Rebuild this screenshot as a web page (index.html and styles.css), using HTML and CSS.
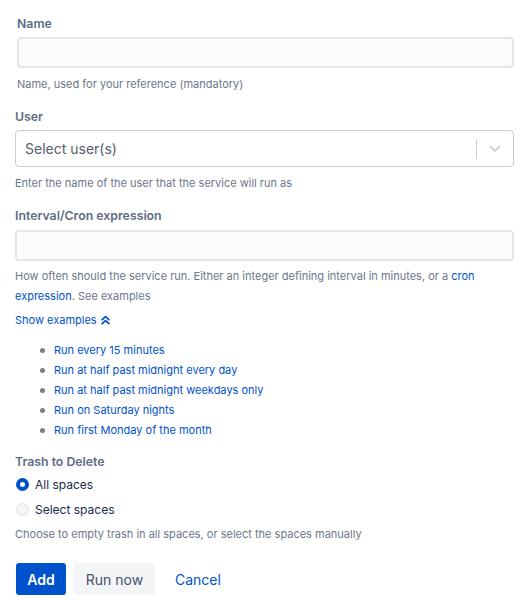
FILE: index.html
```html
<!DOCTYPE html>
<html>
<head>
<meta charset="utf-8">
<link rel="stylesheet" href="styles.css">
</head>
<body>
<form class="form">
  <div class="field field-name">
    <label class="label">Name</label>
    <input class="text-input" type="text">
    <div class="help help-first">Name, used for your reference (mandatory)</div>
  </div>

  <div class="field">
    <label class="label">User</label>
    <div class="select">
      <span class="placeholder">Select user(s)</span>
      <span class="sep"></span>
      <span class="chev">
        <svg width="12" height="8" viewBox="0 0 12 8"><path d="M1.5 1.5 L6 6 L10.5 1.5" fill="none" stroke="#c7c7c7" stroke-width="1.6" stroke-linecap="round" stroke-linejoin="round"/></svg>
      </span>
    </div>
    <div class="help">Enter the name of the user that the service will run as</div>
  </div>

  <div class="field">
    <label class="label">Interval/Cron expression</label>
    <input class="text-input input-interval" type="text">
    <div class="help help-wide">How often should the service run. Either an integer defining interval in minutes, or a <a class="link">cron</a><br><a class="link">expression</a>. See examples</div>
    <div class="toggle"><a class="link">Show examples</a>
      <svg class="dbl" width="9" height="10" viewBox="0 0 9 10"><path d="M1.2 4.6 L4.5 1.6 L7.8 4.6 M1.2 8.6 L4.5 5.6 L7.8 8.6" fill="none" stroke="#0052cc" stroke-width="1.8" stroke-linecap="round" stroke-linejoin="round"/></svg>
    </div>
    <ul class="examples">
      <li><a class="link">Run every 15 minutes</a></li>
      <li><a class="link">Run at half past midnight every day</a></li>
      <li><a class="link">Run at half past midnight weekdays only</a></li>
      <li><a class="link">Run on Saturday nights</a></li>
      <li><a class="link">Run first Monday of the month</a></li>
    </ul>
  </div>

  <div class="field">
    <label class="label label-trash">Trash to Delete</label>
    <div class="radio-row">
      <span class="radio checked"></span><span class="radio-text">All spaces</span>
    </div>
    <div class="radio-row">
      <span class="radio"></span><span class="radio-text">Select spaces</span>
    </div>
    <div class="help help-radio">Choose to empty trash in all spaces, or select the spaces manually</div>
  </div>

  <div class="buttons">
    <button type="button" class="btn btn-primary">Add</button>
    <button type="button" class="btn btn-default">Run now</button>
    <button type="button" class="btn btn-link">Cancel</button>
  </div>
</form>
</body>
</html>
```
FILE: styles.css
```css
html, body {
  margin: 0;
  padding: 0;
  background: #ffffff;
}
body {
  font-family: Inter, "Noto Sans", "Liberation Sans", sans-serif;
  color: #172b4d;
}
.form {
  padding: 16px 18px 0 15px;
}
.field {
  display: flex;
  flex-direction: column;
}
.field-name {
  margin-left: 2px;
}
.label {
  display: block;
  font-size: 12.3px;
  line-height: 16px;
  font-weight: 600;
  color: #5e6c84;
  margin-top: 17px;
}
.field-name .label {
  margin-top: 0;
}
.text-input {
  box-sizing: border-box;
  height: 31px;
  margin: 5px 0 0 0;
  padding: 0 8px;
  border: 2px solid #e4e6ea;
  border-radius: 4px;
  background: #fafbfc;
  font: inherit;
  outline: none;
}
.input-interval {
  margin-top: 6px;
}
.help {
  font-size: 11px;
  line-height: 16px;
  color: #6b778c;
  margin-top: 8px;
}
.help-wide {
  line-height: 20px;
  margin-top: 5px;
}
.link {
  color: #0052cc;
  text-decoration: none;
}
.select {
  box-sizing: border-box;
  height: 37px;
  margin-top: 5px;
  border: 1px solid #cccccc;
  border-radius: 4px;
  background: #fff;
  display: flex;
  align-items: center;
}
.placeholder {
  flex: 1;
  padding-left: 9px;
  font-size: 14px;
  color: #555e6b;
}
.sep {
  width: 1px;
  height: 20px;
  background: #cccccc;
}
.chev {
  width: 36px;
  display: flex;
  justify-content: center;
  align-items: center;
}
.toggle {
  font-size: 11px;
  line-height: 20px;
  margin-top: 4px;
  display: flex;
  align-items: center;
  gap: 4px;
}
.examples {
  margin: 10px 0 0 0;
  padding: 0 0 0 39px;
  list-style: none;
}
.examples li {
  font-size: 11px;
  line-height: 20px;
  position: relative;
}
.examples li::before {
  content: "";
  position: absolute;
  left: -14px;
  top: 8px;
  width: 5px;
  height: 5px;
  border-radius: 50%;
  background: #7a7f88;
}
.label-trash {
  margin-top: 14px;
}
.radio-row {
  display: flex;
  align-items: center;
  height: 25px;
}
.radio-row:first-of-type {
  margin-top: 2px;
}
.radio {
  box-sizing: border-box;
  width: 13px;
  height: 13px;
  border-radius: 50%;
  border: 1px solid #dfe1e6;
  background: #f4f5f7;
  margin-left: 1px;
  margin-right: 6px;
  display: inline-block;
}
.radio.checked {
  border: 4px solid #0052cc;
  background: #ffffff;
}
.radio-text {
  font-size: 12px;
  color: #172b4d;
}
.help-radio {
  margin-top: 4px;
}
.buttons {
  display: flex;
  align-items: center;
  gap: 8px;
  margin-top: 21px;
  margin-left: 1px;
}
.btn {
  height: 32px;
  border: none;
  border-radius: 3px;
  font-family: inherit;
  font-size: 14px;
  padding: 0 12px;
  white-space: nowrap;
  cursor: pointer;
}
.btn-primary {
  width: 50px;
  padding: 0;
  background: #0052cc;
  color: #ffffff;
  font-weight: 600;
}
.btn-default {
  width: 81px;
  padding: 0;
  background: #f4f5f7;
  color: #42526e;
}
.btn-link {
  background: transparent;
  color: #0052cc;
}
```
